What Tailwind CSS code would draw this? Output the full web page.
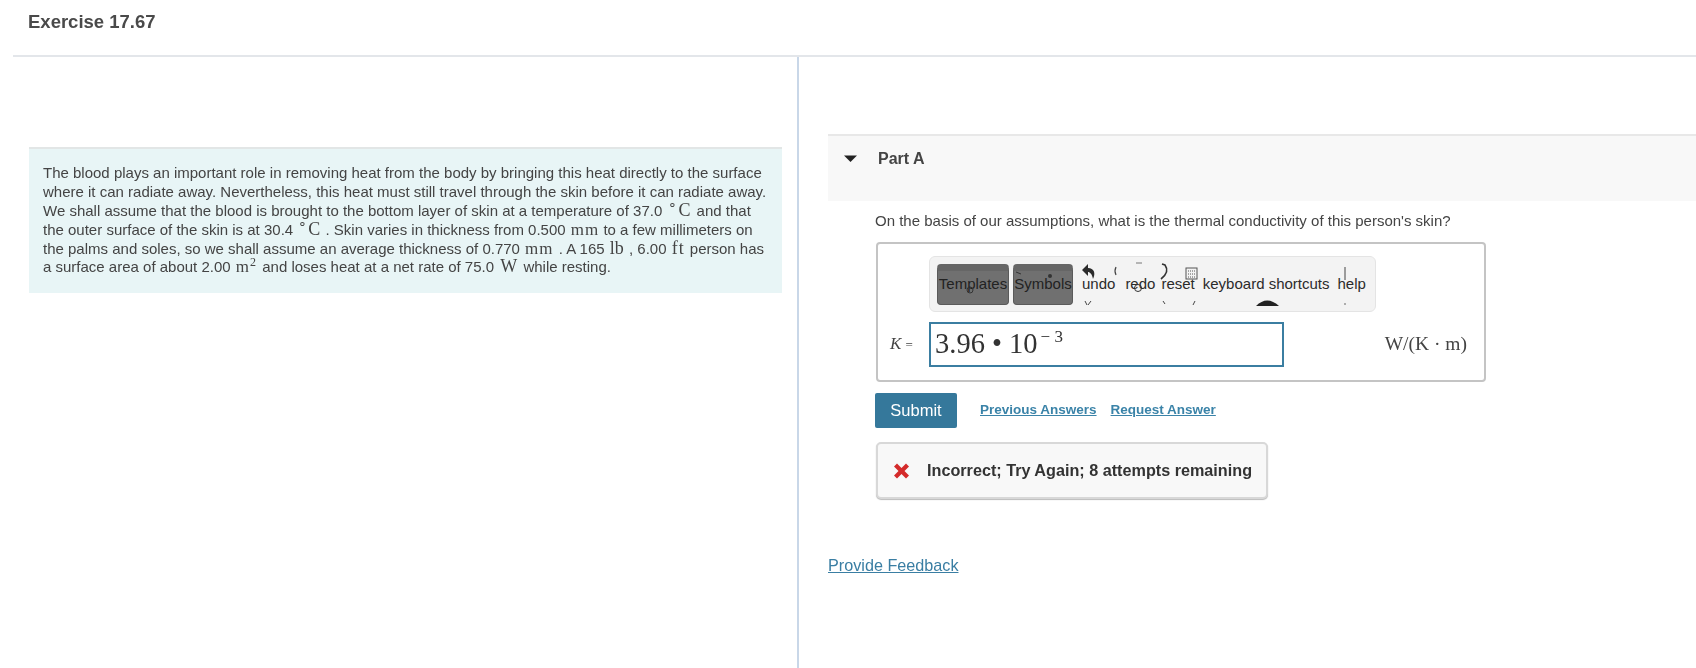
<!DOCTYPE html>
<html>
<head>
<meta charset="utf-8">
<script src="https://cdn.jsdelivr.net/npm/@tailwindcss/browser@4"></script>
</head>
<body class="bg-white">
<div class="w-[1696px] h-[668px] overflow-hidden flex flex-col font-['Liberation_Sans',Arial,sans-serif] text-[#333] blur-[0.4px]">
  <header class="h-[57px] ml-[13px] shrink-0 border-b-2 border-[#e3e6ea] pl-[15px] pt-[10px]">
    <h1 class="text-[18.5px] leading-[24px] font-bold text-[#4a4a4a]">Exercise 17.67</h1>
  </header>
  <main class="flex flex-1 min-h-0">
    <section class="w-[799px] shrink-0 border-r-2 border-[#c9d7e8] pl-[29px] pr-[15px] pt-[90px]">
      <div class="h-[146px] bg-[#e8f5f6] border-t-2 border-[#e2e6e6] pl-[14px] pr-[10px] pt-[15px] text-[15px] leading-[18.65px] text-[#444] whitespace-nowrap">
        <p class="h-[18.65px]">The blood plays an important role in removing heat from the body by bringing this heat directly to the surface</p>
        <p class="h-[18.65px]">where it can radiate away. Nevertheless, this heat must still travel through the skin before it can radiate away.</p>
        <p class="h-[18.65px]">We shall assume that the blood is brought to the bottom layer of skin at a temperature of 37.0 <span class="font-['Liberation_Serif',serif] text-[18px] leading-none mx-[2px]"><sup class="text-[14px] leading-none mr-[1px]">∘</sup>C</span> and that</p>
        <p class="h-[18.65px]">the outer surface of the skin is at 30.4 <span class="font-['Liberation_Serif',serif] text-[18px] leading-none mx-[1px]"><sup class="text-[14px] leading-none mr-[1px]">∘</sup>C</span> . Skin varies in thickness from 0.500 <span class="font-['Liberation_Serif',serif] text-[17px] leading-none tracking-[1px] ml-[1px]">mm</span> to a few millimeters on</p>
        <p class="h-[18.65px]">the palms and soles, so we shall assume an average thickness of 0.770 <span class="font-['Liberation_Serif',serif] text-[17px] leading-none tracking-[1px] mx-[1px]">mm</span> . A 165 <span class="font-['Liberation_Serif',serif] text-[18px] leading-none mx-[1px]">lb</span> , 6.00 <span class="font-['Liberation_Serif',serif] text-[18px] leading-none tracking-[1px] mx-[1px]">ft</span> person has</p>
        <p class="h-[18.65px]">a surface area of about 2.00 <span class="font-['Liberation_Serif',serif] text-[17px] leading-none tracking-[1px] mx-[1px]">m<sup class="text-[12px] leading-none">2</sup></span> and loses heat at a net rate of 75.0 <span class="font-['Liberation_Serif',serif] text-[18px] leading-none mx-[2px]">W</span> while resting.</p>
      </div>
    </section>
    <section class="flex-1 min-w-0 pl-[29px] pt-[77px]">
      <div class="h-[67px] bg-[#f8f8f8] border-t-2 border-[#e8e8e8] flex items-start pt-[13px]">
        <svg class="ml-[16px] mt-[6px] w-[13px] h-[7px]" viewBox="0 0 13 7"><path d="M0 0.5 H13 L6.5 7 Z" fill="#222"/></svg>
        <h2 class="ml-[21px] text-[16px] leading-[20px] font-bold text-[#444]">Part A</h2>
      </div>
      <div class="pl-[47px]">
        <p class="mt-[10px] text-[15px] leading-[20px] text-[#444]">On the basis of our assumptions, what is the thermal conductivity of this person's skin?</p>
        <div class="mt-[11px] ml-[1px] w-[610px] h-[140px] border-2 border-[#c4c4c4] rounded-[4px] pl-[51px] pt-[12px] relative">
          <div class="relative w-[447px] h-[56px] bg-[#f3f3f3] border border-[#e4e4e4] rounded-[6px] flex items-center pl-[7px] text-[15px] text-[#2b2b2b] whitespace-nowrap">
            <span class="w-[72px] h-[41px] rounded-[4px] bg-[#707070] border border-[#5a5a5a] border-t-[7px] border-t-[#666] flex items-center justify-center text-[#222] pb-[6px]">Templates</span>
            <span class="ml-[4px] w-[60px] h-[41px] rounded-[4px] bg-[#707070] border border-[#5a5a5a] border-t-[7px] border-t-[#666] flex items-center justify-center text-[#222] pb-[6px]">Symbols</span>
            <span class="ml-[9px]">undo</span>
            <span class="ml-[10px]">redo</span>
            <span class="ml-[6px]">reset</span>
            <span class="ml-[8px]">keyboard shortcuts</span>
            <span class="ml-[8px]">help</span>
            <svg class="absolute left-[-1px] top-[-1px] pointer-events-none" width="447" height="56" viewBox="0 0 447 56">
              <path d="M153 14 L159 8 V12 C165 12 167 17 164 23 C163 18 161 16 159 16 V20 Z" fill="#2b2b2b"/>
              <path d="M187 11 Q185 15 187 19" fill="none" stroke="#444" stroke-width="1.2"/>
              <path d="M207 7 H213" stroke="#777" stroke-width="1"/>
              <path d="M233 8 L236 9 Q241 16 232 23" fill="none" stroke="#333" stroke-width="1.6"/>
              <rect x="257" y="12" width="11" height="11" fill="none" stroke="#555" stroke-width="1"/>
              <path d="M259 15 H266 M259 18 H266 M259 21 H266" stroke="#555" stroke-width="1" stroke-dasharray="1 1"/>
              <path d="M156 45 L158 49 M162 45 L159 49 M234 45 L236 48 M266 45 L264 49" fill="none" stroke="#444" stroke-width="1"/>
              <path d="M327 50 Q338 39 350 50 Z" fill="#222"/>
              <path d="M416 11 V24" stroke="#444" stroke-width="1"/>
              <circle cx="416" cy="48" r="0.8" fill="#555"/>
              <circle cx="121" cy="20" r="2" fill="#333"/>
              <path d="M87 16 L92 18" stroke="#333" stroke-width="1"/>
              <circle cx="41" cy="34" r="3" fill="none" stroke="#333" stroke-width="1"/>
              <circle cx="209" cy="32" r="3.5" fill="none" stroke="#333" stroke-width="1"/>
            </svg>
          </div>
          <div class="absolute left-[12px] top-[77px] w-[592px] h-[46px] flex items-center">
            <span class="w-[39px] shrink-0 font-['Liberation_Serif',serif] text-[17px] text-[#444]"><i>K</i> <span class="text-[13px]">=</span></span>
            <div class="w-[355px] h-[45px] shrink-0 border-2 border-[#3b7ea1] pl-[4px] font-['Liberation_Serif',serif] text-[28.5px] leading-[40px] text-[#333]">3.96 • 10<sup class="text-[17px] leading-none top-[-11px] ml-[3px]">− 3</sup></div>
            <span class="ml-auto mr-[15px] font-['Liberation_Serif',serif] text-[19.5px] text-[#444] whitespace-nowrap">W/(K · m)</span>
          </div>
        </div>
        <div class="mt-[11px] flex items-center">
          <button class="w-[82px] h-[35px] bg-[#35789b] rounded-[2px] text-white text-[16.5px]">Submit</button>
          <a class="ml-[23px] text-[13.5px] font-bold text-[#3a83a8] underline">Previous Answers</a>
          <a class="ml-[14px] text-[13.5px] font-bold text-[#3a83a8] underline">Request Answer</a>
        </div>
        <div class="mt-[14px] ml-[1px] w-[392px] h-[57px] bg-[#f8f8f8] border-2 border-[#d8d8d8] rounded-[5px] shadow-[0_1px_1px_#bbb] flex items-center pl-[15px]">
          <svg width="17" height="16" viewBox="0 0 17 16"><path d="M1 3.5 L4 0.5 L8.5 5 L13 0.5 L16 3.5 L11.5 8 L16 12.5 L13 15.5 L8.5 11 L4 15.5 L1 12.5 L5.5 8 Z" fill="#d42b2b"/></svg>
          <span class="ml-[17px] text-[16.2px] font-bold text-[#333] whitespace-nowrap">Incorrect; Try Again; 8 attempts remaining</span>
        </div>
      </div>
      <a class="block mt-[56px] text-[16.2px] leading-[20px] text-[#3a7ea3] underline">Provide Feedback</a>
    </section>
  </main>
</div>
</body>
</html>
